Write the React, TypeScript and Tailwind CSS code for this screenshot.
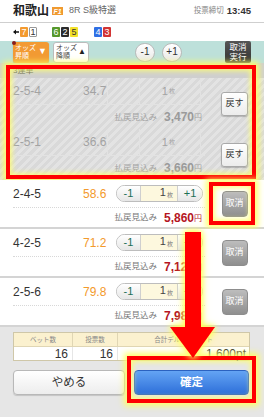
import type { ReactNode } from "react";

const glow =
	"shadow-[0_0_6px_3px_rgba(255,255,100,0.95),inset_0_0_5px_2px_rgba(255,255,110,0.85)]";

const Badge = ({ n, cls }: { n: string; cls: string }) => (
	<span
		className={`flex h-[10px] w-[8px] items-center justify-center rounded-[1px] text-[9px] leading-none ${cls}`}
	>
		{n}
	</span>
);

const Circle = ({ children }: { children: ReactNode }) => (
	<span className="flex h-[19px] w-[20px] items-center justify-center rounded-full border border-[#b9b9b9] bg-gradient-to-b from-white to-[#e9e9e9] text-[10px] text-[#333] leading-none">
		{children}
	</span>
);

const Stepper = () => (
	<div className="ml-[11px] flex h-[17px] w-[87px] overflow-hidden rounded-full border border-[#bdbdbd] text-[11px] leading-none">
		<span className="flex w-[23px] items-center justify-center bg-gradient-to-b from-white to-[#e6e6e6] text-[#1d6f55]">
			-1
		</span>
		<span className="flex w-[38px] items-end justify-end border-x border-[#cfcfcf] bg-[#fdf8de] pr-[4px] pb-[3px] text-[#444]">
			1<span className="ml-[1px] text-[6px] text-[#777]">枚</span>
		</span>
		<span className="flex flex-1 items-center justify-center bg-gradient-to-b from-white to-[#e6e6e6] text-[#1d6f55]">
			+1
		</span>
	</div>
);

const ActiveRow = ({
	combo,
	odds,
	payout,
	framed,
}: {
	combo: string;
	odds: string;
	payout: string;
	framed?: boolean;
}) => (
	<div className="relative flex h-[49px] border-b-2 border-[#d4d4d4] bg-white">
		<div className="flex w-[205px] flex-col pl-[13px]">
			<div className="flex h-[28px] items-center border-b border-dotted border-[#d8d8d8]">
				<span className="w-[70px] text-[12px] text-[#333]">{combo}</span>
				<span className="w-[22px] text-right text-[12px] text-[#f39a2c]">
					{odds}
				</span>
				<Stepper />
			</div>
			<div className="flex flex-1 items-center justify-end pr-[3px]">
				<span className="text-[8.5px] text-[#777]">払戻見込み</span>
				<span className="ml-[7px] text-[12px] font-bold text-[#b5161f]">
					{payout}
				</span>
				<span className="mt-[2px] text-[8px] text-[#b5161f]">円</span>
			</div>
		</div>
		<div className="flex flex-1 items-center justify-center">
			<span className="flex h-[26px] w-[26px] items-center justify-center rounded-[4px] border border-[#8d8d8d] bg-gradient-to-b from-[#bdbdbd] to-[#8f8f8f] text-[9px] text-white">
				取消
			</span>
		</div>
		{framed && (
			<div
				className={`absolute top-[2px] left-[209px] h-[43px] w-[46px] border-4 border-[#ff0000] ${glow}`}
			/>
		)}
	</div>
);

const DisabledRow = ({
	combo,
	odds,
	payout,
}: {
	combo: string;
	odds: string;
	payout: string;
}) => (
	<div className="flex h-[51px] text-[#a3a3a3]">
		<div className="flex w-[205px] flex-col pl-[13px]">
			<div className="flex h-[27px] items-center border-b border-[#e2e2e2]">
				<span className="w-[70px] text-[12px]">{combo}</span>
				<span className="w-[22px] text-right text-[12px]">{odds}</span>
				<div className="ml-[2px] flex h-full w-[94px] border-x border-[#e2e2e2]">
					<span className="w-[32px] border-r border-[#e2e2e2]" />
					<span className="flex flex-1 items-center justify-end pr-[25px] text-[11px]">
						1<span className="ml-[1px] text-[6px]">枚</span>
					</span>
				</div>
			</div>
			<div className="flex flex-1 items-center justify-end pr-[3px]">
				<span className="text-[8.5px]">払戻見込み</span>
				<span className="ml-[7px] text-[12px] font-bold text-[#9a9a9a]">
					{payout}
				</span>
				<span className="mt-[2px] text-[8px]">円</span>
			</div>
		</div>
		<div className="flex flex-1 items-center justify-center">
			<span className="flex h-[24px] w-[27px] items-center justify-center rounded-[3px] border border-[#a9a9a9] bg-gradient-to-b from-white to-[#ececec] text-[9px] text-[#333] shadow-[0_1px_1px_rgba(0,0,0,0.2)]">
				戻す
			</span>
		</div>
	</div>
);

export default function App() {
	return (
		<div className="relative h-[417px] w-[264px] overflow-hidden bg-white font-['Liberation_Sans','Noto_Sans_CJK_JP',sans-serif]">
			{/* header */}
			<div className="flex h-[23px] items-center border-b border-[#cfcfcf] px-[13px]">
				<span className="text-[12px] font-bold leading-none text-[#222]">
					和歌山
				</span>
				<span className="ml-[3px] flex h-[8px] w-[11px] items-center justify-center bg-[#f09a30] text-[7px] font-bold italic leading-none text-white">
					F1
				</span>
				<span className="ml-[6px] text-[9px] text-[#666]">8R S級特選</span>
				<span className="ml-auto text-[7.5px] text-[#888]">投票締切</span>
				<span className="ml-[3px] text-[9.5px] font-bold text-[#333]">
					13:45
				</span>
			</div>

			{/* selected numbers */}
			<div className="flex h-[18px] items-center pl-[13px]">
				<svg width="6" height="6" viewBox="0 0 6 6" className="mr-[1px]">
					<path d="M0 3 L3 0.5 V2.2 H6 V3.8 H3 V5.5 Z" fill="#111" />
				</svg>
				<div className="flex gap-[1px]">
					<Badge n="7" cls="bg-[#f39a2f] text-white" />
					<Badge n="1" cls="border border-[#999] bg-white text-[#333]" />
				</div>
				<div className="ml-[15px] flex gap-[1px]">
					<Badge n="6" cls="bg-[#56982c] text-white" />
					<Badge n="2" cls="bg-[#2c2c2c] text-white" />
					<Badge n="5" cls="bg-[#f3e12a] text-[#333]" />
				</div>
				<div className="ml-[16px] flex gap-[1px]">
					<Badge n="4" cls="bg-[#2f6fe4] text-white" />
					<Badge n="3" cls="bg-[#d23434] text-white" />
				</div>
			</div>

			{/* sort / adjust bar */}
			<div className="flex h-[22px] items-center bg-[#bde0da] px-[13px]">
				<div className="relative flex h-[21px] w-[36px] items-center justify-between rounded-[3px] bg-[#f29a33] px-[2px] shadow-[0_1px_1px_rgba(0,0,0,0.3)]">
					<span className="absolute -top-[1px] -left-[1px] h-[4px] w-[4px] rounded-full bg-[#8a1d1d]" />
					<span className="whitespace-nowrap text-[7px] leading-[8px] text-white">
						オッズ
						<br />
						昇順
					</span>
					<span className="text-[9px] text-white">▼</span>
				</div>
				<div className="ml-[4px] flex h-[21px] w-[36px] items-center justify-between rounded-[3px] border border-[#bbb] bg-white px-[2px]">
					<span className="whitespace-nowrap text-[7px] leading-[8px] text-[#444]">
						オッズ
						<br />
						降順
					</span>
					<span className="text-[8px] text-[#222]">▲</span>
				</div>
				<div className="ml-[46px] flex gap-[7px]">
					<Circle>-1</Circle>
					<Circle>+1</Circle>
				</div>
				<div className="ml-auto flex h-[22px] w-[26px] flex-col items-center justify-center rounded-[2px] bg-gradient-to-b from-[#555] to-[#333] text-[8.5px] leading-[10px] text-white">
					<span>取消</span>
					<span>実行</span>
				</div>
			</div>

			{/* removed bets */}
			<div className="relative bg-[repeating-linear-gradient(135deg,#d9d9d9_0,#d9d9d9_3px,#e3e3e3_3px,#e3e3e3_6px)]">
				<div className="flex h-[15px] items-end bg-[#cfcfcf] pb-[1px] pl-[13px] text-[8px] text-[#555]">
					3連単
				</div>
				<DisabledRow combo="2-5-4" odds="34.7" payout="3,470" />
				<DisabledRow combo="2-5-1" odds="36.6" payout="3,660" />
				<div
					className={`absolute top-[2px] right-[8px] bottom-[1px] left-[6px] border-4 border-[#ff0000] ${glow}`}
				/>
			</div>

			{/* active bets */}
			<ActiveRow combo="2-4-5" odds="58.6" payout="5,860" framed />
			<ActiveRow combo="4-2-5" odds="71.2" payout="7,120" />
			<ActiveRow combo="2-5-6" odds="79.8" payout="7,980" />

			{/* summary */}
			<div className="h-[90px] bg-[#e6e6e6] px-[13px] pt-[5px]">
				<div className="flex w-[237px] flex-col border border-[#cfc7a8] text-[#333]">
					<div className="flex h-[13px] bg-[#fbf1cf] text-[6.5px] text-[#888]">
						<span className="flex w-[59px] items-center justify-center border-r border-[#e0d6b4]">
							ベット数
						</span>
						<span className="flex w-[45px] items-center justify-center border-r border-[#e0d6b4]">
							投票数
						</span>
						<span className="flex flex-1 items-center justify-center">
							合計デルカポイント
						</span>
					</div>
					<div className="flex h-[14px] border-t border-[#e0d6b4] bg-white text-[12px]">
						<span className="flex w-[59px] items-center justify-end border-r border-[#e6e6e6] pr-[4px]">
							16
						</span>
						<span className="flex w-[45px] items-center justify-end border-r border-[#e6e6e6] pr-[4px]">
							16
						</span>
						<span className="flex flex-1 items-center justify-end pr-[3px]">
							1,600pt
						</span>
					</div>
				</div>
				<div className="mt-[9px] flex gap-[9px]">
					<span className="flex h-[25px] w-[112px] items-center justify-center rounded-[4px] border border-[#b8b8b8] bg-gradient-to-b from-white to-[#ededed] text-[11.5px] text-[#333] shadow-[0_1px_1px_rgba(0,0,0,0.15)]">
						やめる
					</span>
					<div className="relative">
						<span className="flex h-[25px] w-[115px] items-center justify-center rounded-[4px] border border-[#2b62c0] bg-gradient-to-b from-[#64a4f4] to-[#2e6fd9] text-[11.5px] font-bold text-white">
							確定
						</span>
						<div
							className={`absolute -top-[14px] -right-[7px] -bottom-[8px] -left-[7px] border-4 border-[#ff0000] ${glow}`}
						/>
					</div>
				</div>
			</div>

			{/* annotation arrow */}
			<svg
				className="absolute top-[226px] left-[160px] [filter:drop-shadow(0_0_3px_#ffff50)_drop-shadow(0_0_3px_#ffff70)]"
				width="64"
				height="140"
				viewBox="0 0 64 140"
			>
				<rect x="25" y="6" width="16" height="96" fill="#ff0000" />
				<polygon points="10,101 55,101 33,132" fill="#ff0000" />
			</svg>
		</div>
	);
}
